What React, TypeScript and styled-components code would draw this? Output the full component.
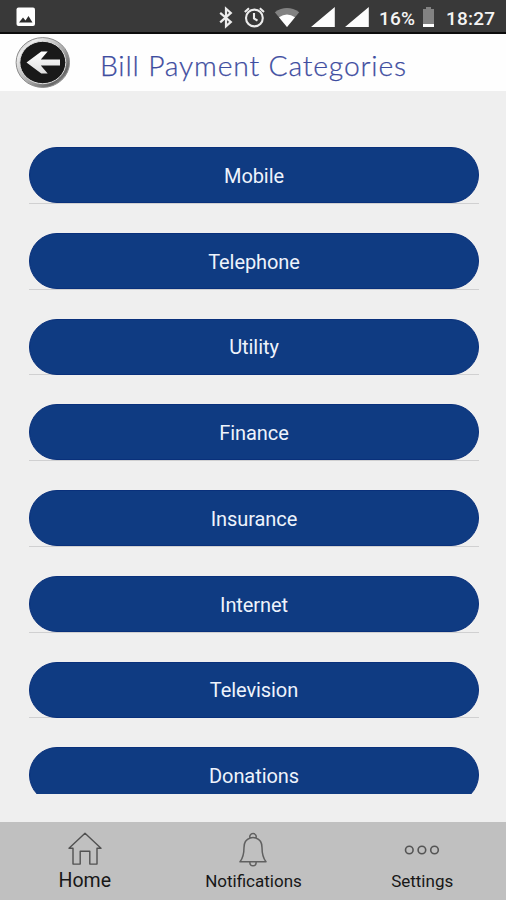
import React from 'react';
import styled, { createGlobalStyle } from 'styled-components';

const GlobalStyle = createGlobalStyle`
  * { box-sizing: border-box; }
  body { margin: 0; background: #efefef; font-family: Roboto, "Liberation Sans", sans-serif; }
`;

const Screen = styled.div`
  display: flex;
  flex-direction: column;
  width: 506px;
  height: 900px;
  overflow: hidden;
  background: #efefef;
`;

const StatusBar = styled.header`
  display: flex;
  flex: none;
  align-items: center;
  justify-content: space-between;
  height: 34px;
  padding: 0 11px 0 15px;
  background: #393939;
  border-bottom: 2px solid #0c0c0c;
  color: #f4f4f4;
`;

const StatusIcons = styled.div`
  display: flex;
  align-items: center;
  height: 32px;
  svg { display: block; flex: none; }
`;

const StatusText = styled.span<{ $width: number; $gap: number; $spacing: number }>`
  width: ${p => p.$width}px;
  margin-left: ${p => p.$gap}px;
  padding-top: 5px;
  font-size: 19px;
  line-height: 24px;
  font-weight: 500;
  letter-spacing: ${p => p.$spacing}px;
  white-space: nowrap;
`;

const TitleBar = styled.div`
  display: flex;
  flex: none;
  align-items: center;
  height: 56.5px;
  padding-left: 15px;
  background: #fefefe;
`;

const BackButton = styled.button`
  flex: none;
  width: 56px;
  height: 52px;
  padding: 0;
  border: 0;
  background: none;
  svg { display: block; }
`;

const Title = styled.h1`
  margin: 0 0 0 29px;
  padding-top: 6px;
  font-family: Lato, sans-serif;
  font-size: 28.3px;
  line-height: 34px;
  font-weight: 300;
  letter-spacing: 0.82px;
  color: #3e4da0;
  -webkit-text-stroke: 0.25px #3e4da0;
  white-space: nowrap;
`;

const CategoryList = styled.main`
  display: flex;
  flex: none;
  flex-direction: column;
  gap: 29px;
  height: 646.5px;
  margin: 56.5px 27.5px 28.5px 28.5px;
  overflow: hidden;
`;

const CategoryRow = styled.div`
  flex: none;
  height: 56.76px;
  border-bottom: 1px solid #d0d0d1;
`;

const CategoryButton = styled.button`
  display: block;
  width: 100%;
  height: 56px;
  padding: 1.5px 0 0 1px;
  border: 1px solid #09307b;
  border-radius: 28px;
  background: #0f3b82;
  color: #eef3fc;
  font-family: Roboto, sans-serif;
  font-size: 20px;
  letter-spacing: -0.08px;
`;

const NavBar = styled.nav`
  display: grid;
  flex: none;
  grid-template-columns: 1fr 1fr 1fr;
  height: 78.5px;
  background: #c0c0c0;
`;

const NavItem = styled.div<{ $large?: boolean }>`
  display: flex;
  flex-direction: column;
  align-items: center;
  padding: 8.5px 0 0 1px;
  color: #171717;
  font-size: ${p => (p.$large ? '19.5px' : '17px')};
  line-height: 24px;
  span { margin-top: 2px; }
  svg { display: block; }
`;

function PictureIcon() {
  return (
    <svg width="22" height="22" viewBox="0 0 22 22">
      <rect x="1.5" y="2.5" width="18.5" height="18.5" rx="2" fill="#fff" />
      <path d="m4 17.5 4-5 2.5 3 3-4.5 4 6.5z" fill="#2d2d2d" />
    </svg>
  );
}

function SystemIcons() {
  return (
    <svg width="169" height="32" viewBox="0 0 169 32" fill="none">
      <path d="m1.2 12.5 10.6 9-4.8 4.3V8.3l4.8 4.2-10.6 9.5" transform="translate(0 .4)" stroke="#ededed" strokeWidth="2.2" />
      <g stroke="#ededed" strokeWidth="2.1">
        <circle cx="35.4" cy="18" r="8.4" />
        <path d="M35 13v5.5l3.5 2.2M25.8 12l4.2-3.7M40.8 8.3l4.2 3.7" />
      </g>
      <path d="M55.8 12.2Q68 3.8 80.2 12.2L68 27z" fill="#828282" />
      <path d="M60 17.2Q68 11.8 76 17.2L68 27z" fill="#fff" />
      <path d="M115.8 7v20H92zM149.8 7v20H126z" fill="#fcfcfc" />
    </svg>
  );
}

function BatteryIcon() {
  return (
    <svg width="13" height="22" viewBox="0 0 13 22">
      <path d="M1 3h3V1h5v2h3v18H1z" transform="translate(0 1)" fill="#828282" />
      <path d="M1 19h11v3H1z" fill="#fff" />
    </svg>
  );
}

function BackIcon() {
  return (
    <svg width="56" height="52" viewBox="0 0 56 52">
      <defs>
        <linearGradient id="rim" x1="0" y1="0" x2="1" y2="1">
          <stop offset="0" stopColor="#777" />
          <stop offset=".2" stopColor="#eee" />
          <stop offset=".55" stopColor="#aaa" />
          <stop offset=".8" stopColor="#666" />
          <stop offset="1" stopColor="#ccc" />
        </linearGradient>
        <linearGradient id="arrow" x1="0" y1="0" x2="0" y2="1">
          <stop offset="0" stopColor="#fff" />
          <stop offset="1" stopColor="#dedede" />
        </linearGradient>
      </defs>
      <ellipse cx="27.8" cy="26.5" rx="26.7" ry="24.9" fill="url(#rim)" stroke="#8c8c8c" />
      <ellipse cx="27.8" cy="26.5" rx="23" ry="21.2" fill="#191919" stroke="#ddd" />
      <path d="m11.5 26.5 14.8-11h6.4l-6.9 7.9H45v6.2H25.8l6.9 7.9h-6.4z" fill="url(#arrow)" />
    </svg>
  );
}

function HomeIcon() {
  return (
    <svg width="36" height="36" viewBox="0 0 36 36" fill="none" stroke="#515151" strokeWidth="1.4" strokeLinejoin="round">
      <path d="M18 2.2 34 17.3h-4v15.8h-7.2V20.2h-9.6v12.9H6V17.3H2z" />
    </svg>
  );
}

function BellIcon() {
  return (
    <svg width="32" height="36" viewBox="0 0 32 36" fill="none" stroke="#606060" strokeWidth="1.5" strokeLinejoin="round">
      <path d="M13.2 7.3a3.2 3.2 0 1 1 5.6 0M13.2 7C8.8 8.4 7 12 7 16.5c0 7-1 10.5-4 14.3h26c-3-3.8-4-7.3-4-14.3 0-4.5-1.8-8.1-6.2-9.5a9 9 0 0 0-5.6 0ZM12.8 31.2c.2 4.8 6.2 4.8 6.4 0" />
    </svg>
  );
}

function DotsIcon() {
  return (
    <svg width="38" height="36" viewBox="0 0 38 36" fill="none" stroke="#555" strokeWidth="1.6">
      <circle cx="6.3" cy="19" r="3.8" />
      <circle cx="18.9" cy="19" r="3.8" />
      <circle cx="31.5" cy="19" r="3.8" />
    </svg>
  );
}

const categories = ['Mobile', 'Telephone', 'Utility', 'Finance', 'Insurance', 'Internet', 'Television', 'Donations'];

export default function App() {
  return (
    <Screen>
      <GlobalStyle />
      <StatusBar>
        <StatusIcons><PictureIcon /></StatusIcons>
        <StatusIcons>
          <SystemIcons />
          <StatusText $width={43} $gap={-9} $spacing={0.2}>16%</StatusText>
          <BatteryIcon />
          <StatusText $width={49} $gap={11} $spacing={0.2}>18:27</StatusText>
        </StatusIcons>
      </StatusBar>
      <TitleBar>
        <BackButton aria-label="Back"><BackIcon /></BackButton>
        <Title>Bill Payment Categories</Title>
      </TitleBar>
      <CategoryList>
        {categories.map(name => (
          <CategoryRow key={name}>
            <CategoryButton>{name}</CategoryButton>
          </CategoryRow>
        ))}
      </CategoryList>
      <NavBar>
        <NavItem $large><HomeIcon /><span>Home</span></NavItem>
        <NavItem><BellIcon /><span>Notifications</span></NavItem>
        <NavItem><DotsIcon /><span>Settings</span></NavItem>
      </NavBar>
    </Screen>
  );
}
